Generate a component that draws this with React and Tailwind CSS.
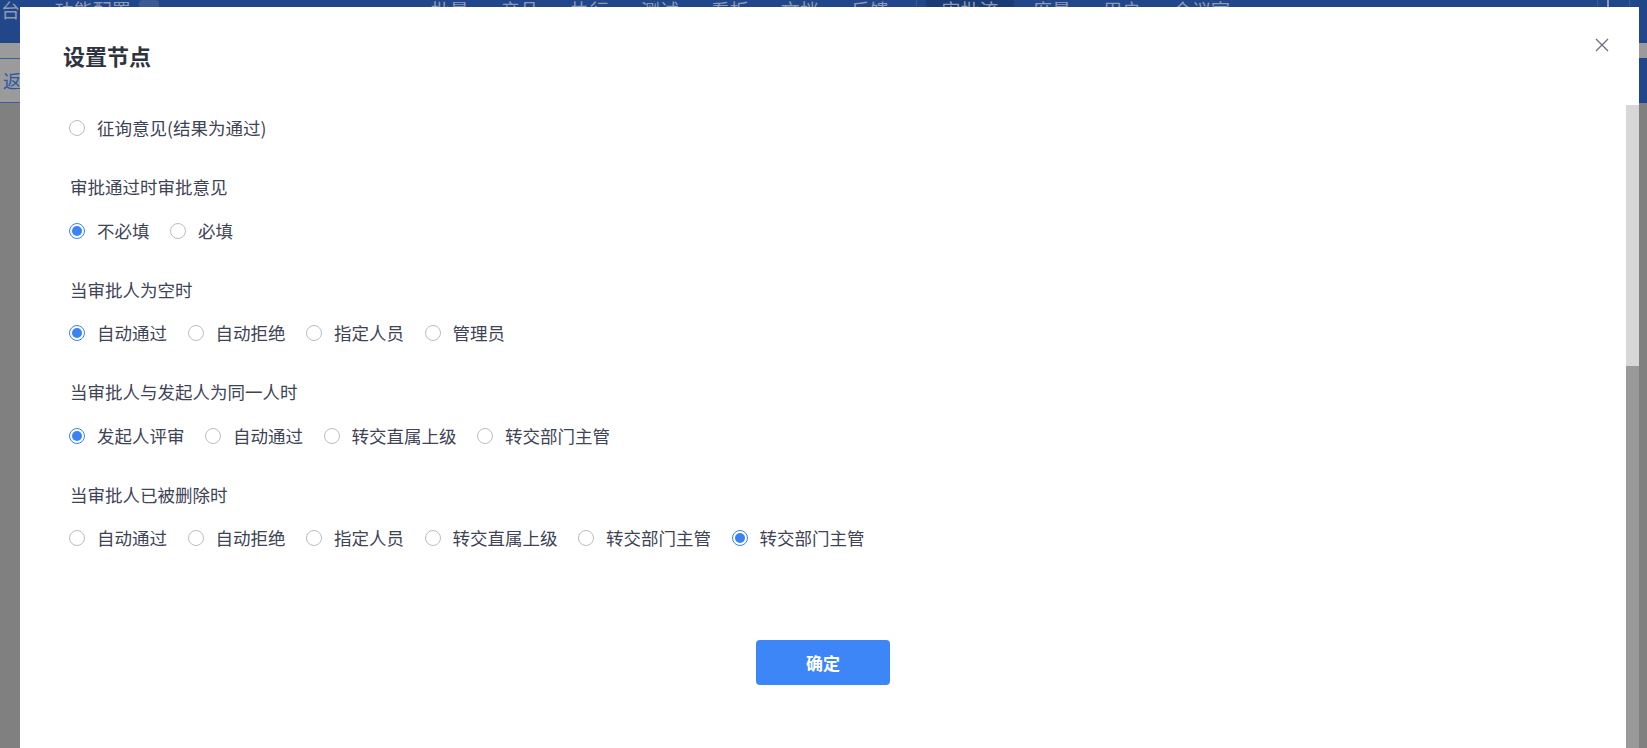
import React from "react";

function Radio({ checked }) {
  return checked ? (
    <span className="w-4 h-4 rounded-full border border-[#3b82f6] bg-white flex items-center justify-center shrink-0">
      <span className="w-[10px] h-[10px] rounded-full bg-[#3b82f6]" />
    </span>
  ) : (
    <span className="w-4 h-4 rounded-full border border-[#b7bdc9] bg-white shrink-0" />
  );
}

function RadioRow({ items, checked }) {
  return (
    <div className="flex items-center gap-[20.5px] h-6">
      {items.map((t, i) => (
        <div key={i} className="flex items-center gap-3">
          <Radio checked={i === checked} />
          <span className="text-[17.5px] leading-6 text-[#3e4356] whitespace-nowrap">{t}</span>
        </div>
      ))}
    </div>
  );
}

function Section({ label, items, checked }) {
  return (
    <div className="mt-[35px]">
      <div className="text-[17.5px] leading-6 text-[#3e4356] mb-[19.5px] pl-[1px]">{label}</div>
      <RadioRow items={items} checked={checked} />
    </div>
  );
}

export default function App() {
  return (
    <div className="relative w-[1647px] h-[748px] overflow-hidden bg-[#808080] font-['Noto_Sans_CJK_SC','Noto_Sans',sans-serif]">
      {/* background page (dimmed) */}
      <div className="h-[43px] bg-[#21468a] flex items-start text-[19px] leading-[19px] text-[#8e9bb4] whitespace-nowrap">
        <span className="ml-[1px]">台</span>
        <span className="ml-[17px]">›</span>
        <span className="ml-[12px]">功能配置</span>
        <span className="ml-[8px] w-[20px] h-[14px] rounded-[3px] bg-[#3a5a92]" />
        <div className="ml-[272px] flex gap-[32px]">
          <span>批量</span>
          <span>产品</span>
          <span>执行</span>
          <span>测试</span>
          <span>看板</span>
          <span>文档</span>
          <span>反馈</span>
        </div>
        <span className="ml-[27px] w-px h-[43px] bg-[#3a5a92]" />
        <span className="ml-[9px] h-[43px] w-[88px] bg-[#1b3b74] flex justify-center">审批流</span>
        <div className="ml-[19px] flex gap-[32px]">
          <span>度量</span>
          <span>用户</span>
          <span>会议室</span>
        </div>
        <span className="ml-[367px] w-px h-[43px] bg-[#3a5a92]" />
        <span className="ml-[9px] w-[2px] h-[14px] bg-[#8e9bb4]" />
        <span className="ml-[20px] w-px h-[43px] bg-[#3a5a92]" />
      </div>
      <div className="h-[15px] bg-[#9b9b9b]" />
      <div className="h-[45px] bg-[#9b9b9b] border-y border-[#3d5f9c] flex items-center justify-between">
        <span className="ml-[3px] text-[18px] text-[#2b57a6]">返回</span>
        <span className="h-[45px] w-[60px] bg-[#21468a] text-[18px] text-[#8e9bb4] flex items-center pl-[2px]">保存</span>
      </div>

      {/* modal */}
      <div className="absolute left-[20px] top-[7px] w-[1619px] bottom-0 bg-white flex flex-col pr-[13px]">
        <div className="pt-[33px] pl-[43px] text-[22px] leading-[30px] font-bold text-[#2d3340]">设置节点</div>
        <svg
          className="absolute right-[30px] top-[31px]"
          width="14"
          height="14"
          viewBox="0 0 14 14"
          fill="none"
          stroke="#6b7080"
          strokeWidth="1.3"
        >
          <path d="M1 1L13 13M13 1L1 13" />
        </svg>
        <div className="absolute right-0 top-[98px] w-[13px] bottom-0 flex flex-col">
          <div className="h-[261px] bg-[#d7d7d7]" />
          <div className="flex-1 bg-[#999999]" />
        </div>

        <div className="pl-[49px] mt-[46px]">
          <RadioRow items={["征询意见(结果为通过)"]} checked={-1} />
          <Section label="审批通过时审批意见" items={["不必填", "必填"]} checked={0} />
          <Section label="当审批人为空时" items={["自动通过", "自动拒绝", "指定人员", "管理员"]} checked={0} />
          <Section
            label="当审批人与发起人为同一人时"
            items={["发起人评审", "自动通过", "转交直属上级", "转交部门主管"]}
            checked={0}
          />
          <Section
            label="当审批人已被删除时"
            items={["自动通过", "自动拒绝", "指定人员", "转交直属上级", "转交部门主管", "转交部门主管"]}
            checked={5}
          />
        </div>

        <div className="mt-[90px] flex justify-center">
          <button className="w-[134px] h-[45px] rounded-[4px] bg-[#3d86f8] text-white text-[17px] font-bold">
            确定
          </button>
        </div>
      </div>
    </div>
  );
}
